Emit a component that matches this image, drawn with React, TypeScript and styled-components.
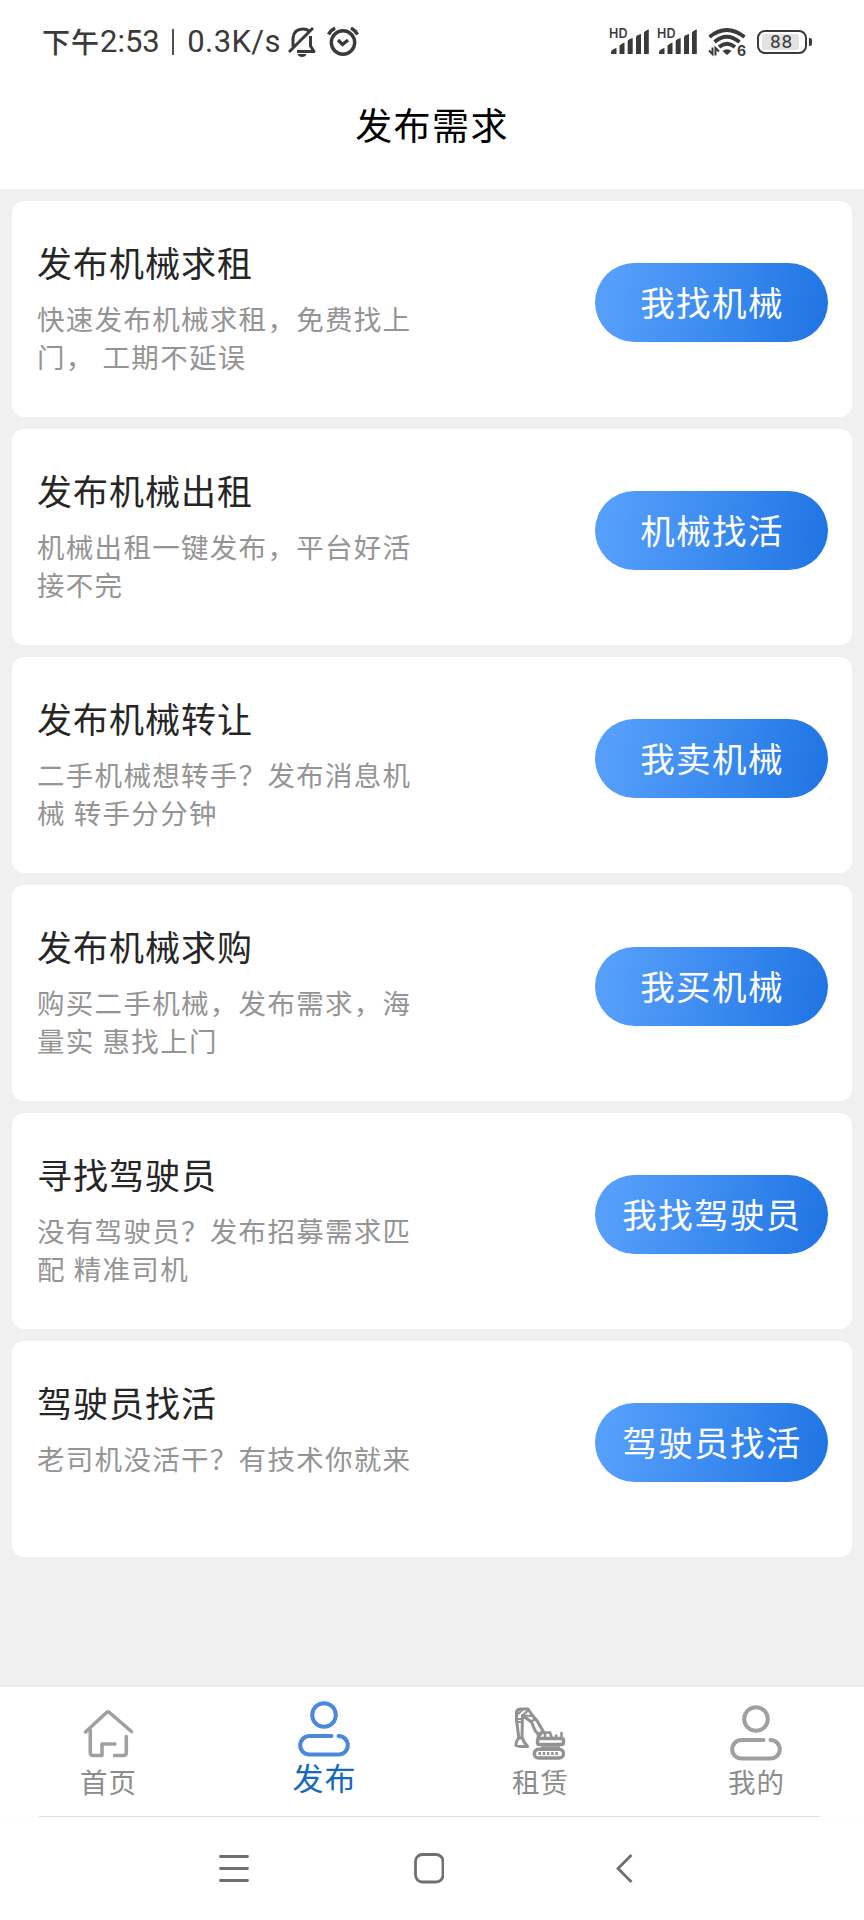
import React from "react";
import styled, { createGlobalStyle } from "styled-components";

const GlobalStyle = createGlobalStyle`
  * { box-sizing: border-box; }
  body {
    margin: 0;
    background: #f0f0f0;
    font-family: "Noto Sans CJK SC", sans-serif;
  }
`;

const Screen = styled.div`
  display: flex;
  flex-direction: column;
  width: 864px;
  height: 1920px;
  background: #f0f0f0;
`;

const StatusBar = styled.div`
  display: flex;
  align-items: center;
  height: 84px;
  padding: 0 52px 0 42px;
  background: #fff;
  color: #3a3a3a;
`;

const ClockText = styled.div`
  display: flex;
  align-items: center;
  width: 246px;
  height: 84px;
  white-space: pre;
`;

const ClockCjk = styled.span`
  font-size: 28px;
  font-weight: 500;
  letter-spacing: 1px;
  line-height: 40px;
  padding-bottom: 3px;
`;

const ClockLatin = styled.span<{ $gap?: number; $spacing?: number }>`
  font-family: Roboto, sans-serif;
  font-size: 31px;
  line-height: 40px;
  letter-spacing: ${(p) => p.$spacing ?? 0}px;
  margin-left: ${(p) => p.$gap ?? 0}px;
`;

const ClockDivider = styled.span`
  width: 2.5px;
  height: 26px;
  margin: 0 13px 0 12px;
  background: #505050;
`;

const StatusIcon = styled.svg<{ $gap?: number }>`
  display: block;
  flex: none;
  margin-left: ${(p) => p.$gap ?? 0}px;
`;

const StatusRight = styled.div`
  display: flex;
  align-items: center;
  margin-left: auto;
`;

const Signal = styled.div<{ $gap?: number }>`
  display: grid;
  width: 42px;
  height: 30px;
  margin-left: ${(p) => p.$gap ?? 0}px;
  > * { grid-area: 1 / 1; }
`;

const SignalTag = styled.span`
  padding-top: 1px;
  font: 600 12.5px/12px Inter, sans-serif;
  letter-spacing: 0.2px;
`;

const Wifi = styled.div`
  display: grid;
  width: 38px;
  height: 30px;
  margin-left: 9px;
  > * { grid-area: 1 / 1; }
`;

const WifiTag = styled.span`
  align-self: end;
  justify-self: end;
  font: 700 14px/13px Inter, sans-serif;
`;

const Battery = styled.div`
  display: flex;
  align-items: center;
  margin-left: 11px;
`;

const BatteryBody = styled.div`
  display: flex;
  width: 50px;
  height: 24px;
  padding: 2px 6px 2px 3px;
  border: 2.5px solid #3a3a3a;
  border-radius: 8px;
`;

const BatteryLevel = styled.div`
  flex: 1;
  border-radius: 3px;
  background: #e2e2e2;
  color: #3a3a3a;
  font: 400 19px/16px Roboto, sans-serif;
  letter-spacing: 0.8px;
  text-align: center;
  padding-left: 2px;
`;

const BatteryTip = styled.div`
  width: 3px;
  height: 8px;
  margin-left: 2px;
  border-radius: 0 2px 2px 0;
  background: #3a3a3a;
`;

const Header = styled.header`
  height: 105px;
  background: #fff;
  text-align: center;
`;

const HeaderTitle = styled.h1`
  margin: 0;
  padding-top: 13px;
  color: #000;
  font-size: 37px;
  font-weight: 400;
  letter-spacing: 1.4px;
  line-height: 54px;
`;

const CardList = styled.main`
  display: flex;
  flex: 1;
  flex-direction: column;
  gap: 12px;
  padding: 12px;
`;

const Card = styled.section`
  display: flex;
  justify-content: space-between;
  height: 216px;
  padding: 36px 24px 0 25px;
  border-radius: 12px;
  background: #fff;
`;

const CardText = styled.div`
  width: 380px;
`;

const CardTitle = styled.h2`
  margin: 0;
  color: #262626;
  font-size: 35px;
  font-weight: 400;
  letter-spacing: 1px;
  line-height: 50px;
`;

const CardDescription = styled.p`
  margin: 12px 0 0;
  color: #949494;
  font-size: 27.5px;
  font-weight: 400;
  letter-spacing: 1.3px;
  word-spacing: 0.5px;
  line-height: 38.4px;
`;

const ActionButton = styled.button`
  width: 233px;
  height: 79px;
  margin: 26px 0 0;
  padding: 0 0 4px 1px;
  border: 0;
  border-radius: 40px;
  background: linear-gradient(100deg, #559ffb 8%, #2176e4 96%);
  color: #fff;
  font-family: inherit;
  font-size: 34.5px;
  letter-spacing: 1.4px;
  line-height: 50px;
  white-space: nowrap;
`;

const TabBar = styled.nav`
  display: grid;
  grid-template-columns: repeat(4, 1fr);
  height: 129px;
  background: #fff;
  box-shadow: 0 -1px 3px rgba(0, 0, 0, 0.06);
`;

const Tab = styled.a<{ $active?: boolean }>`
  display: flex;
  flex-direction: column;
  align-items: center;
  padding-top: ${(p) => (p.$active ? 12 : 16)}px;
  color: ${(p) => (p.$active ? "#1668bb" : "#8c8c8c")};
  font-size: ${(p) => (p.$active ? 31 : 27.5)}px;
  letter-spacing: 1px;
  line-height: 40px;
`;

const TabIcon = styled.svg`
  display: block;
  flex: none;
`;

const TabLabel = styled.span`
  padding-left: 1px;
`;

const SystemNav = styled.div`
  display: flex;
  justify-content: center;
  gap: 165px;
  height: 103px;
  padding: 36px 6px 0 0;
  background: #fff;
`;

const Divider = styled.div`
  height: 1px;
  margin: 0 44px 0 39px;
  background: #dedede;
`;

const Bottom = styled.footer`
  background: #fff;
`;

const cards = [
  { title: "发布机械求租", text: "快速发布机械求租，免费找上门， 工期不延误", action: "我找机械" },
  { title: "发布机械出租", text: "机械出租一键发布，平台好活接不完", action: "机械找活" },
  { title: "发布机械转让", text: "二手机械想转手？发布消息机械 转手分分钟", action: "我卖机械" },
  { title: "发布机械求购", text: "购买二手机械，发布需求，海量实 惠找上门", action: "我买机械" },
  { title: "寻找驾驶员", text: "没有驾驶员？发布招募需求匹配 精准司机", action: "我找驾驶员" },
  { title: "驾驶员找活", text: "老司机没活干？有技术你就来", action: "驾驶员找活" },
];

function SignalBars({ gap }: { gap?: number }) {
  return (
    <Signal $gap={gap}>
      <SignalTag>HD</SignalTag>
      <svg width="42" height="30" viewBox="0 0 42 30" fill="#3a3a3a">
        <path d="M2 27v-1.500q0-3 5.500-4.500v6zM10.500 27v-8q0-1.500 5-3.500v11.500zM18.700 27v-13q0-1.500 5-3v16zM27 27v-17q0-1.500 5-3v20zM35 27v-21q0-2 4.800-3.500v24.500z" />
      </svg>
    </Signal>
  );
}

function HouseIcon() {
  return (
    <TabIcon width="52" height="58" viewBox="0 0 52 58" fill="none" stroke="#a0a0a0" strokeWidth="3.600" strokeLinecap="round" strokeLinejoin="round">
      <path d="M3.500 29 24 10q2-2 4 0l21.500 18.500M8.300 27v22.500q0 3 3 3h8.700V41h13M44.300 33.500v16q0 3-3 3H32.500" />
    </TabIcon>
  );
}

function PersonIcon({ active }: { active?: boolean }) {
  return (
    <TabIcon width="54" height="58" viewBox="0 0 54 58" fill="none" stroke={active ? "#4a88dc" : "#a0a0a0"} strokeWidth="4" strokeLinecap="round">
      <circle cx="27" cy="16" r="11.800" />
      <path d="M34.500 37H12.500a9.300 9.300 0 0 0 0 18.600h29a9.300 9.300 0 0 0 0-18.600" />
    </TabIcon>
  );
}

function ExcavatorIcon() {
  return (
    <TabIcon width="52" height="58" viewBox="0 0 52 58" fill="none" stroke="#929292" strokeWidth="3" strokeLinejoin="round" strokeLinecap="round">
      <path d="M2.500 19V9.500q0-3 4-3.500h7.500l4.500 6.500 5 6 5.500 9.500-3.500 4.500-4.500-5-3.500-8.500L8.500 12.500 8 34M2.800 19l2 16" />
      <path d="M4 11l5-4.500M9 12l5.500-5M8.500 12.500l10 .5M17.500 18l4.500-2M3 16h5M3 19h5" strokeWidth="2.200" />
      <path d="M4.500 35q-2.500 3.500-2.700 7.200l4.200 1.300h7.500l-4-5.500-1-3z" />
      <path d="M24 35V32l3-2.500h9l2 6M31 30v6M42 35v-2.500M47.500 35v-5" strokeWidth="2.600" />
      <rect x="23.500" y="35.500" width="26" height="6" rx="2" strokeWidth="3.400" />
      <path d="M28 44.300h17" strokeWidth="2.200" />
      <rect x="20.300" y="46.300" width="29.200" height="8.700" rx="4.350" strokeWidth="3.400" />
      <path d="M24.500 50.600h21" strokeWidth="3" strokeLinecap="butt" strokeDasharray="2.500 1.700" />
    </TabIcon>
  );
}

export default function App() {
  return (
    <Screen>
      <GlobalStyle />
      <StatusBar>
        <ClockText>
          <ClockCjk>下午</ClockCjk>
          <ClockLatin>2:53</ClockLatin>
          <ClockDivider />
          <ClockLatin $spacing={0.4}>0.3K/s</ClockLatin>
        </ClockText>
        <StatusIcon width="28" height="32" viewBox="0 0 28 32" fill="none" stroke="#3a3a3a" strokeWidth="3" strokeLinejoin="round">
          <path d="M1 26 25 2M5 20.500V12q1-9 10-9 4 0 6 2M22.500 10v10l3.500 5.500H9" />
          <path d="M9.500 28h9q-1 3-4.500 3t-4.500-3z" fill="#3a3a3a" stroke="none" />
        </StatusIcon>
        <StatusIcon $gap={11} width="33" height="32" viewBox="0 0 33 32" fill="none" stroke="#3a3a3a" strokeWidth="3.400">
          <circle cx="16" cy="16.500" r="11.700" />
          <path d="M1.500 8.500q2-4 6.500-6.500M30.500 8.500q-2-4-6.500-6.500M11 14l4.500 4.500L21 14" />
        </StatusIcon>
        <StatusRight>
          <SignalBars />
          <SignalBars gap={6} />
          <Wifi>
            <svg width="38" height="30" viewBox="0 0 38 30" fill="none" stroke="#3a3a3a" strokeWidth="3.700">
              <path d="M1.500 10q17-14 35 0M6.500 15q12-10.500 25 0M11 20q8-6.500 16 0" />
              <path d="M14.500 24q4.500-3.500 9 0l-4.500 4z" fill="#3a3a3a" stroke="none" />
              <path d="M1 23.500l3.500 3.500v-6.500M11 24.500 7.500 21v7.500" strokeWidth="2" />
            </svg>
            <WifiTag>6</WifiTag>
          </Wifi>
          <Battery>
            <BatteryBody>
              <BatteryLevel>88</BatteryLevel>
            </BatteryBody>
            <BatteryTip />
          </Battery>
        </StatusRight>
      </StatusBar>
      <Header>
        <HeaderTitle>发布需求</HeaderTitle>
      </Header>
      <CardList>
        {cards.map((card) => (
          <Card key={card.title}>
            <CardText>
              <CardTitle>{card.title}</CardTitle>
              <CardDescription>{card.text}</CardDescription>
            </CardText>
            <ActionButton>{card.action}</ActionButton>
          </Card>
        ))}
      </CardList>
      <Bottom>
        <TabBar>
          <Tab>
            <HouseIcon />
            <TabLabel>首页</TabLabel>
          </Tab>
          <Tab $active>
            <PersonIcon active />
            <TabLabel>发布</TabLabel>
          </Tab>
          <Tab>
            <ExcavatorIcon />
            <TabLabel>租赁</TabLabel>
          </Tab>
          <Tab>
            <PersonIcon />
            <TabLabel>我的</TabLabel>
          </Tab>
        </TabBar>
        <Divider />
        <SystemNav>
          <svg width="30" height="32" viewBox="0 0 30 32" fill="none" stroke="#6f6f6f" strokeWidth="2.800" strokeLinecap="round">
            <path d="M1.500 3.500h27M1.500 15.500h27M1.500 27.500h27" />
          </svg>
          <svg width="30" height="32" viewBox="0 0 30 32" fill="none" stroke="#6f6f6f" strokeWidth="2.800">
            <rect x="1.500" y="1.500" width="27.500" height="27.500" rx="7" />
          </svg>
          <svg width="30" height="32" viewBox="0 0 30 32" fill="none" stroke="#6f6f6f" strokeWidth="2.800">
            <path d="M22.500 2 9 15.500 22.500 29" />
          </svg>
        </SystemNav>
      </Bottom>
    </Screen>
  );
}
